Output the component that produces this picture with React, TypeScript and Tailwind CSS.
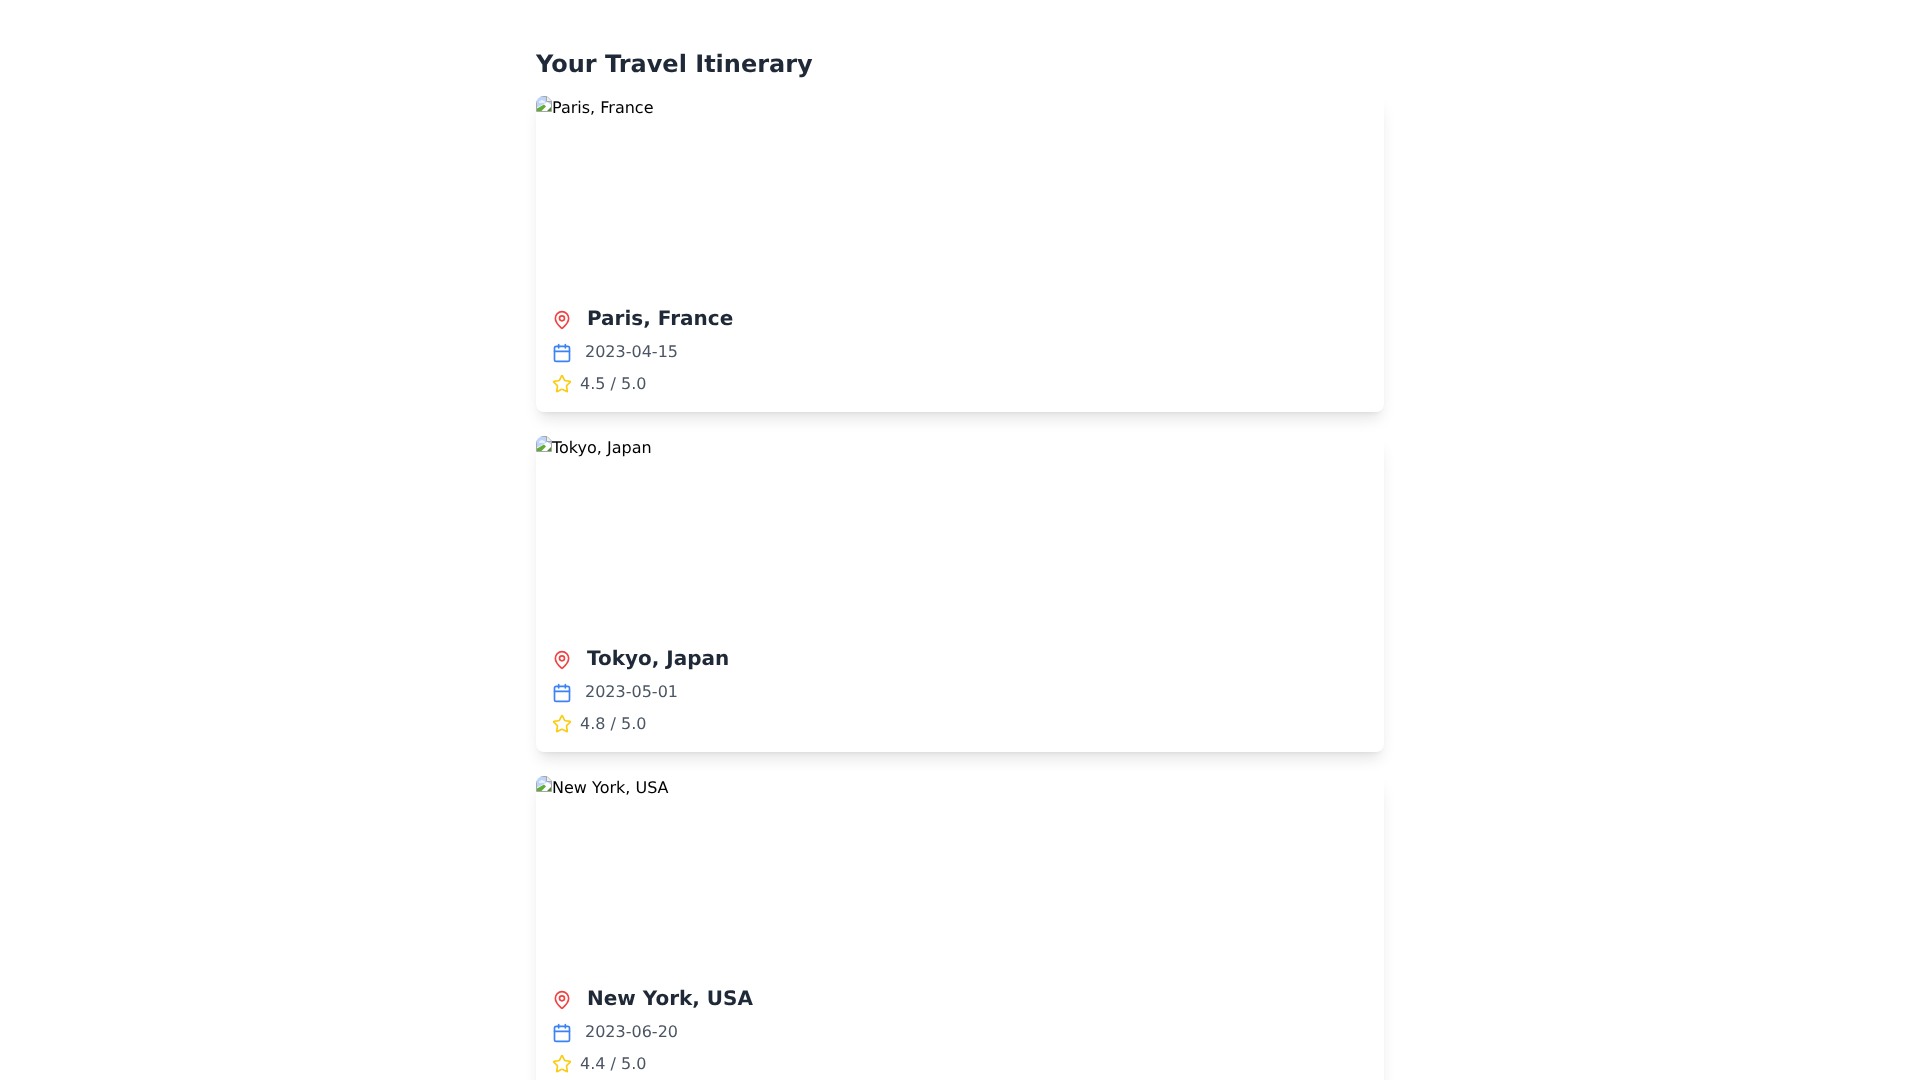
import React from "react";
import { MapPin, Calendar, Star } from "lucide-react";

const trips = [
  { name: "Paris, France", date: "2023-04-15", rating: "4.5" },
  { name: "Tokyo, Japan", date: "2023-05-01", rating: "4.8" },
  { name: "New York, USA", date: "2023-06-20", rating: "4.4" },
];

const BrokenImage: React.FC = () => (
  <svg width="16" height="16" viewBox="0 0 16 16" className="shrink-0">
    <path d="M0.5 0.5H11L15.5 5V15.5H0.5Z" fill="#ffffff" stroke="#a6a6a6" />
    <path d="M1 1H10.5V5.5H15V8.5L11 6L7 8.5L1 11.5Z" fill="#bcd4fb" />
    <path d="M4 5C5 3.5 7 3.5 8 5C9.5 5 9.5 7 8 7H4C2.5 7 2.5 5 4 5Z" fill="#e9f1fe" />
    <path d="M1 15V12.5L8 8.5L10 10.5L5.5 15Z" fill="#5fad35" />
    <path d="M11 15L15 11V15Z" fill="#4f8f2e" />
    <path d="M10.5 0.5V5.5H15.5" fill="#eeeeee" stroke="#a6a6a6" />
  </svg>
);

export default function App() {
  return (
    <div className="mx-auto max-w-4xl px-6 pt-12 pb-6 font-['DejaVu_Sans',sans-serif] [text-rendering:geometricPrecision] [will-change:transform]">
      <h1 className="mb-4 text-2xl font-bold text-[#1f2937]">Your Travel Itinerary</h1>
      {trips.map((trip) => (
        <div key={trip.name} className="mb-6 overflow-hidden rounded-lg bg-white shadow-lg">
          <div className="flex h-48 items-start text-black">
            <BrokenImage />
            <span>{trip.name}</span>
          </div>
          <div className="p-4">
            <div className="mb-2 flex items-center">
              <MapPin size={20} className="mt-1 text-[#ef4444]" />
              <h2 className="ml-[15px] text-xl font-bold text-[#1f2937]">{trip.name}</h2>
            </div>
            <div className="mb-2 flex items-center">
              <Calendar size={20} className="mt-0.5 text-[#3b82f6]" />
              <span className="ml-[13px] text-[#4b5563]">{trip.date}</span>
            </div>
            <div className="flex items-center">
              <Star size={20} className="text-[#facc15]" />
              <span className="ml-2 text-[#4b5563]">{trip.rating} / 5.0</span>
            </div>
          </div>
        </div>
      ))}
    </div>
  );
}
